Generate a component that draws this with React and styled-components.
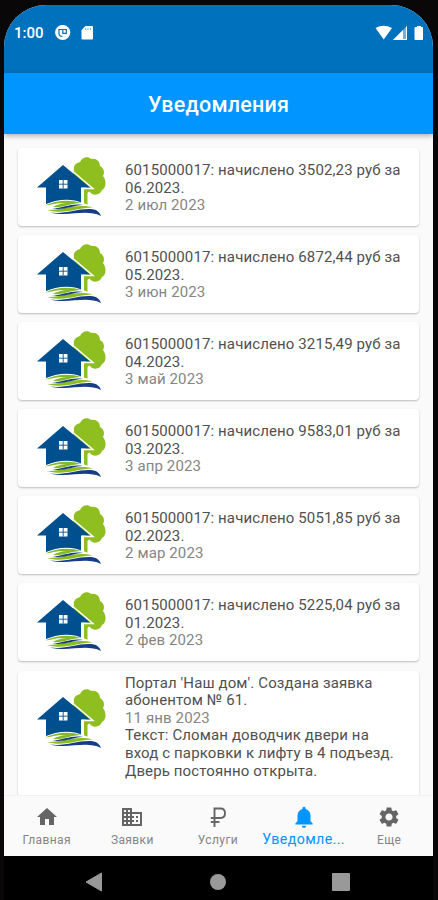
import React from 'react'
import styled, { createGlobalStyle } from 'styled-components'
import { MdBusiness, MdHome, MdNotifications, MdSettings } from 'react-icons/md'

const colors = {
  status: '#0071bc',
  primary: '#0095ff',
  background: '#fafafa',
  text: '#505050',
  muted: '#858585',
  icon: '#656565',
}

const GlobalStyle = createGlobalStyle`
  * {
    box-sizing: border-box;
  }

  body {
    margin: 0;
    background: #090707;
    font-family: Roboto, 'Liberation Sans', sans-serif;
  }
`

const StyledDevice = styled.div`
  height: 900px;
  padding: 5px 5px 0 4px;
  overflow: hidden;
  background: #090707;
`

const StyledScreen = styled.div`
  display: flex;
  flex-direction: column;
  height: 895px;
  overflow: hidden;
  border-radius: 42px 42px 0 0;
  background: ${colors.background};
`

const StyledStatusBar = styled.div`
  display: flex;
  justify-content: space-between;
  flex: none;
  height: 68px;
  padding: 18px 8px 0 10px;
  background: ${colors.status};
  color: #fff;
`

const StyledStatusGroup = styled.div`
  display: flex;
  align-items: center;
  height: 19px;
`

const StyledTime = styled.span`
  width: 40px;
  font-size: 15px;
  font-weight: 500;
`

const StyledHeader = styled.header`
  display: flex;
  align-items: center;
  justify-content: center;
  flex: none;
  z-index: 1;
  height: 61px;
  padding-top: 2px;
  background: ${colors.primary};
  box-shadow: 0 2px 5px rgba(0, 0, 0, 0.3);
  color: #fff;
  font-size: 21.5px;
  font-weight: 500;
  letter-spacing: 0.2px;
`

const StyledList = styled.main`
  display: flex;
  flex-direction: column;
  flex: 1;
  gap: 9.1px;
  min-height: 0;
  padding: 14px 14px 0;
  overflow: hidden;
`

const StyledCard = styled.article`
  display: flex;
  flex: none;
  height: ${({ $isLong }) => ($isLong ? '140px' : '78px')};
  padding: ${({ $isLong }) => ($isLong ? '4px' : '14px')} 0 0 19px;
  border-radius: 4px;
  background: #fff;
  box-shadow: 0 1px 2px rgba(0, 0, 0, 0.26);
`

const StyledLogo = styled.svg`
  flex: none;
  width: 70px;
  height: 60px;
  margin: ${({ $isLong }) => ($isLong ? '14px' : '-5px')} 18px 0 0;
`

const StyledMessage = styled.div`
  color: ${colors.text};
  font-size: 15px;
  line-height: 17.5px;
  letter-spacing: 0.12px;
  white-space: pre;
`

const StyledDate = styled.div`
  color: ${colors.muted};
`

const StyledDetails = styled.div`
  line-height: 17.8px;
`

const StyledTabs = styled.nav`
  display: flex;
  flex: none;
  z-index: 1;
  height: 61px;
  padding-right: 1px;
  border-top: 1px solid #f1f1f1;
  background: ${colors.background};
`

const StyledTab = styled.div`
  display: flex;
  flex: 1;
  flex-direction: column;
  align-items: center;
  min-width: 0;
  padding-top: 9px;
  color: ${({ $isActive }) => ($isActive ? colors.primary : colors.icon)};

  svg {
    flex: none;
    width: ${({ $isActive }) => ($isActive ? '26px' : '24px')};
    height: ${({ $isActive }) => ($isActive ? '26px' : '24px')};
    margin: ${({ $isActive }) => ($isActive ? '-1px' : '0')} 0;
  }
`

const StyledTabLabel = styled.span`
  margin-top: ${({ $isActive }) => ($isActive ? '2px' : '3px')};
  color: ${({ $isActive }) => ($isActive ? colors.primary : colors.muted)};
  font-size: ${({ $isActive }) => ($isActive ? '14.2px' : '12px')};
  line-height: 17px;
  letter-spacing: 0.4px;
  white-space: nowrap;
`

const StyledSystemBar = styled.footer`
  display: flex;
  flex: none;
  align-items: center;
  justify-content: space-between;
  height: 44px;
  padding: 8px 83px 0 81px;
  background: #000;
`

const RubleIcon = () => (
  <svg viewBox="0 0 24 24" fill="none" stroke="currentColor" strokeWidth="1.9">
    <path d="M8.5 22V3.5H14.5Q19 3.5 19 8.2T14.5 13H4.8" />
    <path d="M4.8 17H13.5" />
  </svg>
)

const notifications = [
  { amount: '3502,23', period: '06.2023', date: '2 июл 2023' },
  { amount: '6872,44', period: '05.2023', date: '3 июн 2023' },
  { amount: '3215,49', period: '04.2023', date: '3 май 2023' },
  { amount: '9583,01', period: '03.2023', date: '3 апр 2023' },
  { amount: '5051,85', period: '02.2023', date: '2 мар 2023' },
  { amount: '5225,04', period: '01.2023', date: '2 фев 2023' },
]

const tabs = [
  { label: 'Главная', Icon: MdHome },
  { label: 'Заявки', Icon: MdBusiness },
  { label: 'Услуги', Icon: RubleIcon },
  { label: 'Уведомле...', Icon: MdNotifications, isActive: true },
  { label: 'Еще', Icon: MdSettings },
]

const HouseLogo = ({ isLong }) => (
  <StyledLogo $isLong={isLong} viewBox="0 0 70 60">
    <path
      d="M37 13C36 9 39 6 43 5C45 0 51 -1 54 2C59 1 63 4 63 9C67 11 68 16 66 19C70 24 69 31 65 33C63 39 55 39 52 34L36 17Z"
      fill="#8fbe20"
    />
    <path d="M47 31L54 33L50.5 36V49L47 48Z" fill="#8fbe20" />
    <path
      d="M26 8L53 30.5H44V46Q26 41 9 47V30.5H0Z"
      fill="#00508f"
    />
    <path d="M33 12L56 31.5H45.5V45" fill="none" stroke="#fff" strokeWidth="1.4" />
    <path d="M22 23H30.5V31.5H22Z" fill="#fff" />
    <path d="M26.2 23V31.5M22 27.2H30.5" stroke="#00508f" strokeWidth="0.9" />
    <path
      d="M8 48C19 42 35 41 45 46C53 48 60 51 64 56C48 53 32 59 13 56C9 54 8 51 8 48Z"
      fill="#fff"
    />
    <path
      d="M8 48.5C19 43 34 42.5 44 46C34 46 27 51 16 50C19 48 24 46.5 29 46C21 45.5 14 48 8 48.5Z"
      fill="#86b928"
    />
    <path d="M10 53C24 54 37 46 56 50.5C41 50.5 27 58 10 53Z" fill="#8dbc1e" />
    <path d="M15 51.5C27 51 34 46 46 48C34 48.5 28 53.5 15 51.5Z" fill="#173f88" />
    <path
      d="M13 55.5C29 58 43 50 57 52.5Q62 53.5 64 59C48 51.5 32 60.5 13 55.5Z"
      fill="#183d87"
    />
  </StyledLogo>
)

const NotificationCard = ({ text, date, details, isLong }) => (
  <StyledCard $isLong={isLong}>
    <HouseLogo isLong={isLong} />
    <StyledMessage>
      <div>{text}</div>
      <StyledDate>{date}</StyledDate>
      {details && <StyledDetails>{details}</StyledDetails>}
    </StyledMessage>
  </StyledCard>
)

const StatusBar = () => (
  <StyledStatusBar>
    <StyledStatusGroup>
      <StyledTime>1:00</StyledTime>
      <svg width="40" height="16" viewBox="0 0 40 16">
        <circle cx="8.7" cy="7.5" r="7.6" fill="#fff" />
        <path
          d="M8.5 11.5Q5 11.5 5 8V4.5H8.8V8.3H12.3V4.5H8.8"
          fill="none"
          stroke={colors.status}
          strokeWidth="1.2"
        />
        <path
          d="M31.5 1H38Q39 1 39 2V13.5Q39 14.5 38 14.5H28.5Q27.5 14.5 27.5 13.5V5Z"
          fill="#fff"
        />
        <path
          d="M31.5 3V5M34 3V5M36.5 3V5"
          stroke={colors.status}
          strokeOpacity="0.5"
        />
      </svg>
    </StyledStatusGroup>
    <StyledStatusGroup>
      <svg width="50" height="16" viewBox="0 0 50 16" fill="#fff">
        <path d="M0.5 3Q8.5 -1.5 17 3L8.7 14.5Z" />
        <path d="M18 15L32 1V15Z" fillOpacity="0.45" />
        <path d="M18 15L28 5V15Z" />
        <path d="M31 1.5H32V15H28V14H31Z" />
        <path d="M42 1H46V2H47Q48 2 48 3V14Q48 15 47 15H40.5Q39.5 15 39.5 14V3Q39.5 2 40.5 2H42Z" />
      </svg>
    </StyledStatusGroup>
  </StyledStatusBar>
)

const SystemBar = () => (
  <StyledSystemBar>
    <svg width="18" height="20" viewBox="0 0 18 20">
      <path d="M1 10L16.5 1V19Z" fill="#999" stroke="#999" strokeLinejoin="round" />
    </svg>
    <svg width="18" height="18" viewBox="0 0 18 18">
      <circle cx="9" cy="9" r="8" fill="#999" />
    </svg>
    <svg width="18" height="18" viewBox="0 0 18 18">
      <rect width="18" height="18" rx="1" fill="#999" />
    </svg>
  </StyledSystemBar>
)

const App = () => (
  <>
    <GlobalStyle />
    <StyledDevice>
      <StyledScreen>
        <StatusBar />
        <StyledHeader>Уведомления</StyledHeader>
        <StyledList>
          {notifications.map(({ amount, period, date }) => (
            <NotificationCard
              key={period}
              text={`6015000017: начислено ${amount} руб за\n${period}.`}
              date={date}
            />
          ))}
          <NotificationCard
            isLong
            text={"Портал 'Наш дом'. Создана заявка\nабонентом № 61."}
            date="11 янв 2023"
            details={
              'Текст: Сломан доводчик двери на\nвход с парковки к лифту в 4 подъезд.\nДверь постоянно открыта.'
            }
          />
        </StyledList>
        <StyledTabs>
          {tabs.map(({ label, Icon, isActive }) => (
            <StyledTab key={label} $isActive={isActive}>
              <Icon />
              <StyledTabLabel $isActive={isActive}>{label}</StyledTabLabel>
            </StyledTab>
          ))}
        </StyledTabs>
        <SystemBar />
      </StyledScreen>
    </StyledDevice>
  </>
)

export default App
